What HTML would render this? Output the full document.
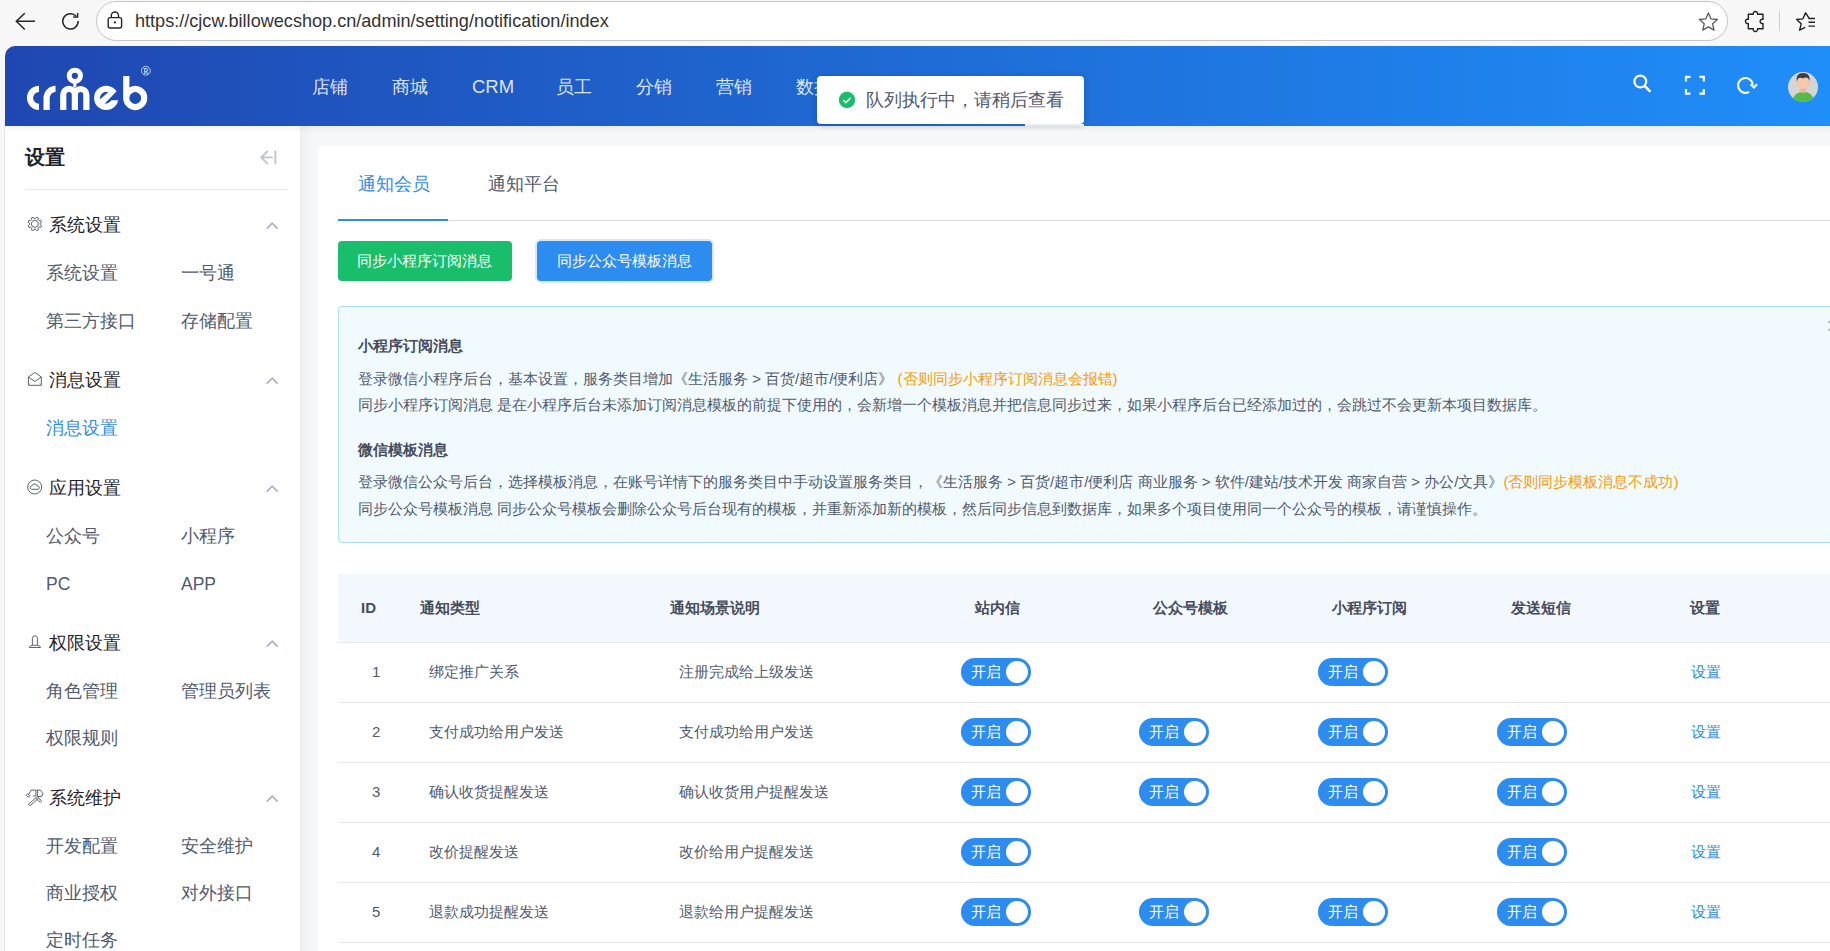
<!DOCTYPE html>
<html><head><meta charset="utf-8">
<style>
*{margin:0;padding:0;box-sizing:border-box}
html,body{width:1830px;height:951px;overflow:hidden;background:#f7f7f7;font-family:"Liberation Sans",sans-serif;position:relative}
.abs{position:absolute}
.t{position:absolute;white-space:nowrap;line-height:1}
#url{position:absolute;left:95.5px;top:1px;width:1632px;height:39.5px;border:1px solid #c6c6c6;border-radius:20px;background:#fff}
#page{position:absolute;left:5px;top:46px;width:1825px;height:905px;background:#f5f7f9;border-top-left-radius:10px;overflow:hidden}
#hdr{position:absolute;left:5px;top:46px;width:1825px;height:80px;border-top-left-radius:10px;background:linear-gradient(90deg,#1f47b1 0%,#1f6fd9 55%,#1f8ef9 100%)}
.nav{position:absolute;top:75px;font-size:17.5px;color:rgba(255,255,255,.86)}
#side{position:absolute;left:5px;top:126px;width:295px;height:825px;background:#fff}
.gh{position:absolute;left:49px;font-size:17.5px;color:#1f2329}
.gi{position:absolute;font-size:17.5px;color:#515a6e}
.car{position:absolute;left:266px}
#card{position:absolute;left:318px;top:146px;width:1540px;height:900px;background:#fff;border-radius:4px}
.al{position:absolute;left:358px;font-size:15px;color:#515a6e}
.alb{position:absolute;left:358px;font-size:15px;color:#464c5b;font-weight:bold}
.or{color:#ff9900}
.th{position:absolute;top:600px;font-size:15px;font-weight:bold;color:#464c5b}
.td{position:absolute;font-size:15px;color:#515a6e}
.rl{position:absolute;left:338px;width:1500px;height:1px;background:#e8eaec}
.sw{position:absolute;width:70px;height:28px;border-radius:14px;background:#2d8cf0}
.sw::after{content:"";position:absolute;left:44.5px;top:3px;width:22px;height:22px;border-radius:50%;background:#fff}
.sw span{position:absolute;left:9.5px;top:5.5px;font-size:15px;color:#fff;line-height:1}
.lk{position:absolute;font-size:15px;color:#2d8cf0}
</style></head><body>
<!-- browser chrome -->
<svg class="abs" style="left:0;top:0" width="140" height="46" viewBox="0 0 140 46">
  <path d="M35 21.3H16.5M24.8 13.2L16.3 21.3L24.8 29.5" fill="none" stroke="#262626" stroke-width="1.5"/>
  <path d="M78.15 21.1A7.7 7.7 0 1 1 76 16" fill="none" stroke="#262626" stroke-width="1.5"/>
  <path d="M73.3 17.1H77.6V12.9" fill="none" stroke="#262626" stroke-width="1.5"/>
</svg>
<div id="url"></div>
<svg class="abs" style="left:0;top:0" width="140" height="46" viewBox="0 0 140 46">
  <rect x="108.2" y="17.6" width="13.4" height="10.4" rx="2" fill="none" stroke="#262626" stroke-width="1.4"/>
  <path d="M111.3 17.6V15.6a3.6 3.6 0 0 1 7.2 0V17.6" fill="none" stroke="#262626" stroke-width="1.4"/>
  <circle cx="114.9" cy="22.4" r="1.1" fill="#262626"/>
</svg>
<div class="t" style="left:135px;top:12px;font-size:18.1px;color:#333">https://cjcw.billowecshop.cn/admin/setting/notification/index</div>
<svg class="abs" style="left:1690px;top:0" width="140" height="46" viewBox="1690 0 140 46">
  <path d="M1708.4 12.9L1711.1 18.9L1717.4 19.5L1712.6 23.8L1714 30.1L1708.4 26.9L1702.8 30.1L1704.2 23.8L1699.4 19.5L1705.7 18.9Z" fill="none" stroke="#5a5a5a" stroke-width="1.3" stroke-linejoin="round"/>
  <path d="M1748.3 14.3H1753.3A2.2 2.2 0 1 1 1757.5 14.3H1763V19.3A2.2 2.2 0 1 0 1763 23.5V28.7H1757.5A2.2 2.2 0 1 1 1753.3 28.7H1748.3V23.5A2.2 2.2 0 1 1 1748.3 19.3Z" fill="none" stroke="#222" stroke-width="1.4" stroke-linejoin="round"/>
  <rect x="1779" y="11" width="1" height="20" fill="#cfcfcf"/>
  <path d="M1809.2 18.3L1805.6 12.8L1802.8 18.9L1796.6 19.5L1801.2 23.8L1799.6 30.2L1805.2 27.3" fill="none" stroke="#222" stroke-width="1.4" stroke-linejoin="round"/>
  <path d="M1808.5 18.5H1815M1808.5 22.3H1815M1808.5 26.1H1815" stroke="#222" stroke-width="1.4"/>
</svg>

<div id="page"></div>
<div id="hdr"></div>
<!-- logo -->
<svg class="abs" style="left:0;top:0" width="160" height="126" viewBox="0 0 160 126">
  <defs>
    <mask id="em"><rect x="0" y="0" width="160" height="126" fill="#fff"/>
      <path d="M100.27 99.34A6.1 6.1 0 0 1 108.17 92.13Z" fill="#000"/>
      <path d="M104.6 103.7L116.6 91.2L121 91.2L121 100.3L111.3 100.3Q109.2 103.7 104.6 103.7Z" fill="#000"/>
    </mask>
  </defs>
  <g fill="none" stroke="#fff" stroke-width="6.2">
    <path d="M39 88.85A9 9 0 0 0 39 106.85"/>
    <path d="M46.6 110V97.9A8.95 8.95 0 0 1 55.55 88.95"/>
    <path d="M63.25 110V94.75A5.8 5.8 0 0 1 74.85 94.75V110M74.85 94.75A5.75 5.75 0 0 1 86.35 94.75V110"/>
    <path d="M126.3 76V98M126.3 98A8.95 8.95 0 1 0 126.3 97.99"/>
  </g>
  <circle cx="74.85" cy="75.85" r="5.6" fill="none" stroke="#fff" stroke-width="5"/>
  <path d="M73.3 83L76.4 83L76.4 86.5L74.85 88L73.3 86.5Z" fill="#fff"/>
  <circle cx="106.2" cy="97.9" r="12.15" fill="#fff" mask="url(#em)"/>
  <circle cx="145.9" cy="70.75" r="4.4" fill="none" stroke="#fff" stroke-width="0.7"/>
  <text x="145.9" y="73.6" font-size="7.5" fill="#fff" text-anchor="middle" font-family="Liberation Serif">R</text>
</svg>
<div class="nav" style="left:312px">店铺</div>
<div class="nav" style="left:392px">商城</div>
<div class="nav" style="left:472px;font-size:18.5px;top:76px">CRM</div>
<div class="nav" style="left:556px">员工</div>
<div class="nav" style="left:636px">分销</div>
<div class="nav" style="left:716px">营销</div>
<div class="nav" style="left:796px">数据</div>
<!-- header icons -->
<svg class="abs" style="left:1620px;top:60px" width="210" height="55" viewBox="1620 60 210 55">
  <circle cx="1640.3" cy="81.5" r="5.9" fill="none" stroke="#fff" stroke-width="2.2"/>
  <path d="M1644.6 85.9L1649.8 91.1" stroke="#fff" stroke-width="2.6" stroke-linecap="round"/>
  <path d="M1686 81.5V76.8H1690.5M1699.3 76.8H1703.8V81.5M1703.8 88.9V93.6H1699.3M1690.5 93.6H1686V88.9" fill="none" stroke="#fff" stroke-width="2.2"/>
  <path d="M1749.2 91.9A7.45 7.45 0 1 1 1752.9 84.6" fill="none" stroke="#fff" stroke-width="2.1"/>
  <path d="M1750.6 84.2L1753.9 87.5L1757 84.2" fill="none" stroke="#fff" stroke-width="2.1"/>
  <clipPath id="av"><circle cx="1803" cy="87" r="15"/></clipPath>
  <g clip-path="url(#av)">
    <rect x="1788" y="72" width="30" height="30" fill="#d5d5d5"/>
    <path d="M1791.5 106Q1791.8 92 1803.3 91.7Q1814.8 92 1815.2 106Z" fill="#55bb47"/>
    <rect x="1800.5" y="87.5" width="5.4" height="5.2" rx="1" fill="#f2b397"/>
    <ellipse cx="1797.8" cy="83.6" rx="1.3" ry="1.7" fill="#f8c0a4"/>
    <ellipse cx="1808.6" cy="83.6" rx="1.3" ry="1.7" fill="#f8c0a4"/>
    <ellipse cx="1803.2" cy="83.2" rx="5.3" ry="6.1" fill="#fcc6aa"/>
    <path d="M1796.6 82.3Q1795.4 73.2 1803.1 73.1Q1810.8 73.2 1809.6 82.3Q1809.2 78 1806.3 77.6Q1803.9 77.5 1803 78.4Q1802 77.5 1799.7 77.7Q1797.2 78.4 1796.6 82.3Z" fill="#3d3d40"/>
  </g>
</svg>

<!-- sidebar -->
<div id="side"></div>
<div class="abs" style="left:4px;top:120px;width:1px;height:831px;background:#e6e6e6"></div>
<div class="abs" style="left:300px;top:126px;width:14px;height:825px;background:linear-gradient(90deg,rgba(0,0,0,.035),rgba(0,0,0,0))"></div>
<div class="t" style="left:25px;top:147px;font-size:20px;font-weight:bold;color:#1f2329">设置</div>
<svg class="abs" style="left:258px;top:148px" width="22" height="18" viewBox="258 148 22 18">
  <path d="M272 157.4H261.4M267.2 151.5L261.3 157.4L267.2 163.3M275.4 151.4V163.4" fill="none" stroke="#c0c4cc" stroke-width="1.9" stroke-linecap="round" stroke-linejoin="round"/>
</svg>
<div class="abs" style="left:25px;top:189px;width:263px;height:1px;background:#e8eaec"></div>
<svg class="abs" style="left:0;top:0" width="300" height="951" viewBox="0 0 300 951">
  <g fill="none" stroke="#5c6370" stroke-width="1">
    <circle cx="34.85" cy="223.9" r="3.5"/>
    <path d="M40.19 224.70L41.56 225.51L40.73 227.51L39.19 227.11L38.06 228.24L38.46 229.78L36.46 230.61L35.65 229.24L34.05 229.24L33.24 230.61L31.24 229.78L31.64 228.24L30.51 227.11L28.97 227.51L28.14 225.51L29.51 224.70L29.51 223.10L28.14 222.29L28.97 220.29L30.51 220.69L31.64 219.56L31.24 218.02L33.24 217.19L34.05 218.56L35.65 218.56L36.46 217.19L38.46 218.02L38.06 219.56L39.19 220.69L40.73 220.29L41.56 222.29L40.19 223.10Z"/>
    <path d="M28.4 377V385.3H41.3V377M28.4 377L34.85 372.4L41.3 377L34.85 381.5Z"/>
    <path d="M30.8 382.4L28.8 384.8M38.9 382.4L40.9 384.8" stroke-opacity=".35"/>
    <circle cx="34.7" cy="487" r="7"/>
    <path d="M31.5 489.3A1.75 1.75 0 0 1 31.9 485.9A2.8 2.8 0 0 1 37.3 486.1A1.65 1.65 0 0 1 38.1 489.3Z"/>
    <path d="M32.4 645.3V638.3a2.5 2.5 0 0 1 5 0V645.3"/>
    <path d="M29.2 647.5Q30 645.3 32.4 645.3H37.4Q39.8 645.3 40.6 647.5Z"/>
    <path d="M26.2 795.3L28.2 797.3L29.8 795.7L27.8 793.7Z M28.6 794.5L31.2 790.1H35.9V796H33.2M36.6 790.1H40.4L42.9 793.6L41.6 796.5H37.6V790.1"/>
    <path d="M37.4 796.5L28.5 804.3L30.1 805.7L39.2 797.7M35.8 798.3L40.2 802.2L41.6 800.8L37.3 797"/>
  </g>
  <g fill="none" stroke="#aab2be" stroke-width="1.7">
    <path d="M266.8 228.6L272.2 223.2L277.6 228.6"/>
    <path d="M266.8 383.6L272.2 378.2L277.6 383.6"/>
    <path d="M266.8 491.6L272.2 486.2L277.6 491.6"/>
    <path d="M266.8 646.6L272.2 641.2L277.6 646.6"/>
    <path d="M266.8 801.6L272.2 796.2L277.6 801.6"/>
  </g>
</svg>
<div class="gh" style="top:212.5px">系统设置</div>
<div class="gi" style="left:46px;top:261px">系统设置</div>
<div class="gi" style="left:181px;top:261px">一号通</div>
<div class="gi" style="left:46px;top:309px">第三方接口</div>
<div class="gi" style="left:181px;top:309px">存储配置</div>
<div class="gh" style="top:367.5px">消息设置</div>
<div class="gi" style="left:46px;top:416px;color:#2d8cf0">消息设置</div>
<div class="gh" style="top:475.5px">应用设置</div>
<div class="gi" style="left:46px;top:524px">公众号</div>
<div class="gi" style="left:181px;top:524px">小程序</div>
<div class="gi" style="left:46px;top:574px">PC</div>
<div class="gi" style="left:181px;top:574px">APP</div>
<div class="gh" style="top:630.5px">权限设置</div>
<div class="gi" style="left:46px;top:679px">角色管理</div>
<div class="gi" style="left:181px;top:679px">管理员列表</div>
<div class="gi" style="left:46px;top:726px">权限规则</div>
<div class="gh" style="top:785.5px">系统维护</div>
<div class="gi" style="left:46px;top:834px">开发配置</div>
<div class="gi" style="left:181px;top:834px">安全维护</div>
<div class="gi" style="left:46px;top:881px">商业授权</div>
<div class="gi" style="left:181px;top:881px">对外接口</div>
<div class="gi" style="left:46px;top:928px">定时任务</div>

<div class="abs" style="left:5px;top:126px;width:1825px;height:7px;background:linear-gradient(180deg,rgba(0,0,0,.045),rgba(0,0,0,0))"></div>
<!-- card -->
<div id="card"></div>
<div class="t" style="left:358px;top:176px;font-size:17.5px;color:#2d8cf0">通知会员</div>
<div class="t" style="left:488px;top:176px;font-size:17.5px;color:#515a6e">通知平台</div>
<div class="abs" style="left:338px;top:220px;width:1500px;height:1px;background:#dcdee2"></div>
<div class="abs" style="left:338px;top:219px;width:110px;height:2px;background:#2d8cf0"></div>

<div class="abs" style="left:338px;top:241px;width:174px;height:40px;border-radius:4px;background:#19be6b"></div>
<div class="t" style="left:357px;top:253px;font-size:15px;color:#fff">同步小程序订阅消息</div>
<div class="abs" style="left:535px;top:239px;width:179px;height:44px;border-radius:6px;background:rgba(45,140,240,.2)"></div>
<div class="abs" style="left:537px;top:241px;width:175px;height:40px;border-radius:4px;background:#2d8cf0"></div>
<div class="t" style="left:557px;top:253px;font-size:15px;color:#fff">同步公众号模板消息</div>

<div class="abs" style="left:338px;top:306px;width:1500px;height:237px;border:1px solid #abdcff;border-radius:4px;background:#f0faff"></div>
<div class="t alb" style="top:338px">小程序订阅消息</div>
<div class="t al" style="top:371px">登录微信小程序后台，基本设置，服务类目增加《生活服务 &gt; 百货/超市/便利店》 <span class="or">(否则同步小程序订阅消息会报错)</span></div>
<div class="t al" style="top:397px">同步小程序订阅消息 是在小程序后台未添加订阅消息模板的前提下使用的，会新增一个模板消息并把信息同步过来，如果小程序后台已经添加过的，会跳过不会更新本项目数据库。</div>
<div class="t alb" style="top:442px">微信模板消息</div>
<div class="t al" style="top:474px">登录微信公众号后台，选择模板消息，在账号详情下的服务类目中手动设置服务类目，《生活服务 &gt; 百货/超市/便利店 商业服务 &gt; 软件/建站/技术开发 商家自营 &gt; 办公/文具》<span class="or">(否则同步模板消息不成功)</span></div>
<div class="t al" style="top:501px">同步公众号模板消息 同步公众号模板会删除公众号后台现有的模板，并重新添加新的模板，然后同步信息到数据库，如果多个项目使用同一个公众号的模板，请谨慎操作。</div>

<svg class="abs" style="left:1820px;top:315px" width="10" height="22" viewBox="1820 315 10 22"><path d="M1828.6 321.2L1838 330.6M1838 321.2L1828.6 330.6" stroke="#8a8e99" stroke-width="1.3"/></svg>
<!-- table -->
<div class="abs" style="left:338px;top:574px;width:1500px;height:68px;background:#f3f8fe"></div>
<div class="rl" style="top:642px"></div>
<div class="rl" style="top:702px"></div>
<div class="rl" style="top:762px"></div>
<div class="rl" style="top:822px"></div>
<div class="rl" style="top:882px"></div>
<div class="rl" style="top:942px"></div>
<div class="t th" style="left:361px">ID</div>
<div class="t th" style="left:420px">通知类型</div>
<div class="t th" style="left:670px">通知场景说明</div>
<div class="t th" style="left:975px">站内信</div>
<div class="t th" style="left:1153px">公众号模板</div>
<div class="t th" style="left:1332px">小程序订阅</div>
<div class="t th" style="left:1511px">发送短信</div>
<div class="t th" style="left:1690px">设置</div>

<div class="t td" style="left:372px;top:664px">1</div>
<div class="t td" style="left:429px;top:664px">绑定推广关系</div>
<div class="t td" style="left:679px;top:664px">注册完成给上级发送</div>
<div class="sw" style="left:961px;top:658px"><span>开启</span></div>
<div class="sw" style="left:1318px;top:658px"><span>开启</span></div>
<div class="t lk" style="left:1691px;top:664px">设置</div>

<div class="t td" style="left:372px;top:724px">2</div>
<div class="t td" style="left:429px;top:724px">支付成功给用户发送</div>
<div class="t td" style="left:679px;top:724px">支付成功给用户发送</div>
<div class="sw" style="left:961px;top:718px"><span>开启</span></div>
<div class="sw" style="left:1139px;top:718px"><span>开启</span></div>
<div class="sw" style="left:1318px;top:718px"><span>开启</span></div>
<div class="sw" style="left:1497px;top:718px"><span>开启</span></div>
<div class="t lk" style="left:1691px;top:724px">设置</div>

<div class="t td" style="left:372px;top:784px">3</div>
<div class="t td" style="left:429px;top:784px">确认收货提醒发送</div>
<div class="t td" style="left:679px;top:784px">确认收货用户提醒发送</div>
<div class="sw" style="left:961px;top:778px"><span>开启</span></div>
<div class="sw" style="left:1139px;top:778px"><span>开启</span></div>
<div class="sw" style="left:1318px;top:778px"><span>开启</span></div>
<div class="sw" style="left:1497px;top:778px"><span>开启</span></div>
<div class="t lk" style="left:1691px;top:784px">设置</div>

<div class="t td" style="left:372px;top:844px">4</div>
<div class="t td" style="left:429px;top:844px">改价提醒发送</div>
<div class="t td" style="left:679px;top:844px">改价给用户提醒发送</div>
<div class="sw" style="left:961px;top:838px"><span>开启</span></div>
<div class="sw" style="left:1497px;top:838px"><span>开启</span></div>
<div class="t lk" style="left:1691px;top:844px">设置</div>

<div class="t td" style="left:372px;top:904px">5</div>
<div class="t td" style="left:429px;top:904px">退款成功提醒发送</div>
<div class="t td" style="left:679px;top:904px">退款给用户提醒发送</div>
<div class="sw" style="left:961px;top:898px"><span>开启</span></div>
<div class="sw" style="left:1139px;top:898px"><span>开启</span></div>
<div class="sw" style="left:1318px;top:898px"><span>开启</span></div>
<div class="sw" style="left:1497px;top:898px"><span>开启</span></div>
<div class="t lk" style="left:1691px;top:904px">设置</div>

<!-- toast -->
<div class="abs" style="left:817px;top:76px;width:267px;height:48px;border-radius:4px;background:#fff;box-shadow:0 1px 6px rgba(0,0,0,.2)"></div>
<svg class="abs" style="left:838px;top:91px" width="18" height="18" viewBox="0 0 18 18">
  <circle cx="9" cy="9" r="8.2" fill="#19be6b"/>
  <path d="M5.3 9.2L7.8 11.6L12.6 6.8" fill="none" stroke="#fff" stroke-width="1.5"/>
</svg>
<div class="abs" style="left:1025px;top:124px;width:59px;height:2px;background:#e9edf3"></div>
<div class="t" style="left:866px;top:92px;font-size:17.5px;color:#515a6e">队列执行中，请稍后查看</div>
</body></html>
